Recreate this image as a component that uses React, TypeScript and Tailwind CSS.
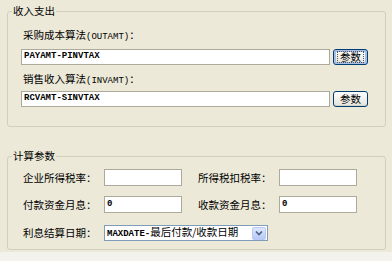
import React from 'react';

const cjk = { fontFamily: '"Noto Sans CJK SC", "Liberation Sans", sans-serif' };
const mono = { fontFamily: '"Liberation Mono", "Noto Sans CJK SC", monospace' };

const XpButton = ({ label, focused }: { label: string; focused?: boolean }) => (
  <button
    type="button"
    className={
      'w-[35px] h-[16px] ml-[3px] rounded-[3px] border border-[#003C74] bg-gradient-to-b from-[#FFFFFF] to-[#E3E2DA] text-[10.5px] leading-[14px] text-black flex items-center justify-center p-[1px] ' +
      (focused ? 'shadow-[inset_0_0_0_2px_#A8C0E8]' : 'shadow-[inset_0_-1px_0_#D6D0C5]')
    }
    style={cjk}
  >
    <span className={focused ? 'outline outline-1 outline-dotted outline-[#555] px-[2px] leading-[10px]' : 'leading-[10px]'}>
      {label}
    </span>
  </button>
);

const Field = ({ value, className }: { value?: string; className: string }) => (
  <div
    className={'bg-white border border-[#ADAA9C] flex items-center pl-[2px] text-[9px] font-bold text-black ' + className}
    style={mono}
  >
    {value}
  </div>
);

const Label = ({ children, className = '' }: { children: React.ReactNode; className?: string }) => (
  <div className={'text-[10.5px] leading-[14px] text-black whitespace-nowrap ' + className} style={cjk}>
    {children}
  </div>
);

const App = () => {
  return (
    <div className="w-[392px] h-[261px] bg-[#ECE9D8] flex flex-col overflow-hidden">
      <div className="px-[7px] pt-[4px]">
        <fieldset className="w-[379px] border border-[#D0D0BF] rounded-[3px] p-0 m-0">
          <legend className="ml-[4px] px-[1px] text-[10.5px] leading-[14px] text-black" style={cjk}>
            收入支出
          </legend>
          <div className="pl-[13px] pt-[10px] pb-[19px]">
            <Label className="ml-[2px]">
              采购成本算法<span className="text-[9px]" style={mono}>(OUTAMT)</span>：
            </Label>
            <div className="flex items-center mt-[5px]">
              <Field value="PAYAMT-PINVTAX" className="w-[309px] h-[16px]" />
              <XpButton label="参数" focused />
            </div>
            <Label className="ml-[2px] mt-[7px]">
              销售收入算法<span className="text-[9px]" style={mono}>(INVAMT)</span>：
            </Label>
            <div className="flex items-center mt-[3px]">
              <Field value="RCVAMT-SINVTAX" className="w-[309px] h-[16px]" />
              <XpButton label="参数" />
            </div>
          </div>
        </fieldset>

        <fieldset className="w-[379px] border border-[#D0D0BF] rounded-[3px] p-0 m-0 mt-[22px]">
          <legend className="ml-[4px] px-[1px] text-[10.5px] leading-[14px] text-black" style={cjk}>
            计算参数
          </legend>
          <div className="pl-[15px] pt-[6px] pb-[8px]">
            <div className="flex items-center">
              <Label className="w-[81px]">企业所得税率：</Label>
              <Field className="w-[78px] h-[17px]" />
              <Label className="w-[81px] ml-[16px]">所得税扣税率：</Label>
              <Field className="w-[78px] h-[17px]" />
            </div>
            <div className="flex items-center mt-[10px]">
              <Label className="w-[81px]">付款资金月息：</Label>
              <Field value="0" className="w-[78px] h-[17px]" />
              <Label className="w-[81px] ml-[16px]">收款资金月息：</Label>
              <Field value="0" className="w-[78px] h-[17px]" />
            </div>
            <div className="flex items-center mt-[12px]">
              <Label className="w-[81px]">利息结算日期：</Label>
              <div className="w-[164px] h-[16px] bg-white border border-[#7F9DB9] flex items-center justify-between pl-[2px] pr-[1px]">
                <span className="text-[10.5px] leading-[14px] text-black whitespace-nowrap" style={cjk}>
                  <span className="text-[9px] font-bold" style={mono}>MAXDATE-</span>最后付款/收款日期
                </span>
                <span className="w-[14px] h-[13px] rounded-[2px] border border-[#B9CBF3] bg-gradient-to-b from-[#DCE6FD] to-[#B6C9F7] flex items-center justify-center">
                  <svg width="8" height="6" viewBox="0 0 8 6">
                    <path d="M1 1.5 L4 4.5 L7 1.5" fill="none" stroke="#4D6185" strokeWidth="1.6" />
                  </svg>
                </span>
              </div>
            </div>
          </div>
        </fieldset>
      </div>
      <div className="flex-1 mt-[2px] bg-[#F3F2EC]" />
    </div>
  );
};

export default App;
